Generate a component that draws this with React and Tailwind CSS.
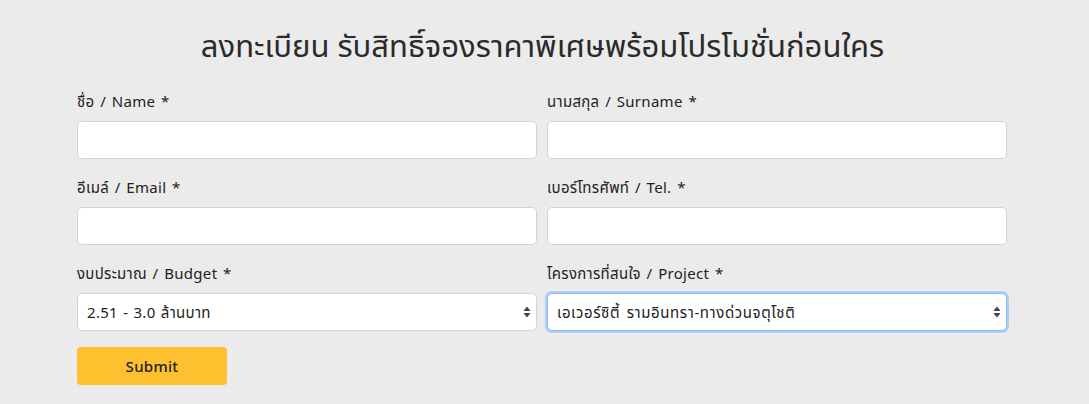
import React from "react";

function Arrows() {
  return (
    <svg width="8" height="14" viewBox="0 0 8 14" className="absolute right-[6px] top-1/2 -translate-y-1/2 pointer-events-none">
      <path d="M4 1.5 L7.5 6 H0.5 Z" fill="#444" />
      <path d="M4 12.5 L7.5 8 H0.5 Z" fill="#444" />
    </svg>
  );
}

function Field({ label, children }) {
  return (
    <div className="flex flex-col">
      <label className="text-[15px] leading-5 text-[#222] mb-[10px] tracking-[0.3px] [word-spacing:1.5px]">{label}</label>
      {children}
    </div>
  );
}

const inputCls = "h-[38px] w-full rounded-[5px] border border-[#cfd4da] bg-white px-3 text-[15px] outline-none";

export default function App() {
  return (
    <div className="min-h-[404px] w-full bg-[#ebebeb] text-[#222]" style={{ fontFamily: '"Noto Sans", "Noto Sans Thai", sans-serif' }}>
      <div className="pt-[24px] text-center text-[31px] leading-[42px] text-[#2a2a2a] pr-[4px]">
        ลงทะเบียน รับสิทธิ์จองราคาพิเศษพร้อมโปรโมชั่นก่อนใคร
      </div>
      <div className="ml-[77px] w-[930px] pt-[25px]">
        <div className="grid grid-cols-2 gap-x-[10px] gap-y-[18px]">
          <Field label="ชื่อ / Name *">
            <input className={inputCls} />
          </Field>
          <Field label="นามสกุล / Surname *">
            <input className={inputCls} />
          </Field>
          <Field label="อีเมล์ / Email *">
            <input className={inputCls} />
          </Field>
          <Field label="เบอร์โทรศัพท์ / Tel. *">
            <input className={inputCls} />
          </Field>
          <Field label="งบประมาณ / Budget *">
            <div className="relative">
              <div className={inputCls + " flex items-center pl-[9px] tracking-[0.3px] [word-spacing:1px]"}>2.51 - 3.0 ล้านบาท</div>
              <Arrows />
            </div>
          </Field>
          <Field label="โครงการที่สนใจ / Project *">
            <div className="relative">
              <div className="flex h-[38px] w-full items-center rounded-[5px] border border-[#80bdff] bg-white pl-[9px] text-[15px] tracking-[0.6px] [word-spacing:2px] shadow-[0_0_0_2px_rgba(0,123,255,0.25)]">เอเวอร์ซิตี้ รามอินทรา-ทางด่วนจตุโชติ</div>
              <Arrows />
            </div>
          </Field>
        </div>
        <button className="mt-[16px] h-[38px] w-[150px] rounded-[4px] bg-[#fdc02f] text-[15px] font-medium text-[#222] tracking-[0.3px]">Submit</button>
      </div>
    </div>
  );
}
